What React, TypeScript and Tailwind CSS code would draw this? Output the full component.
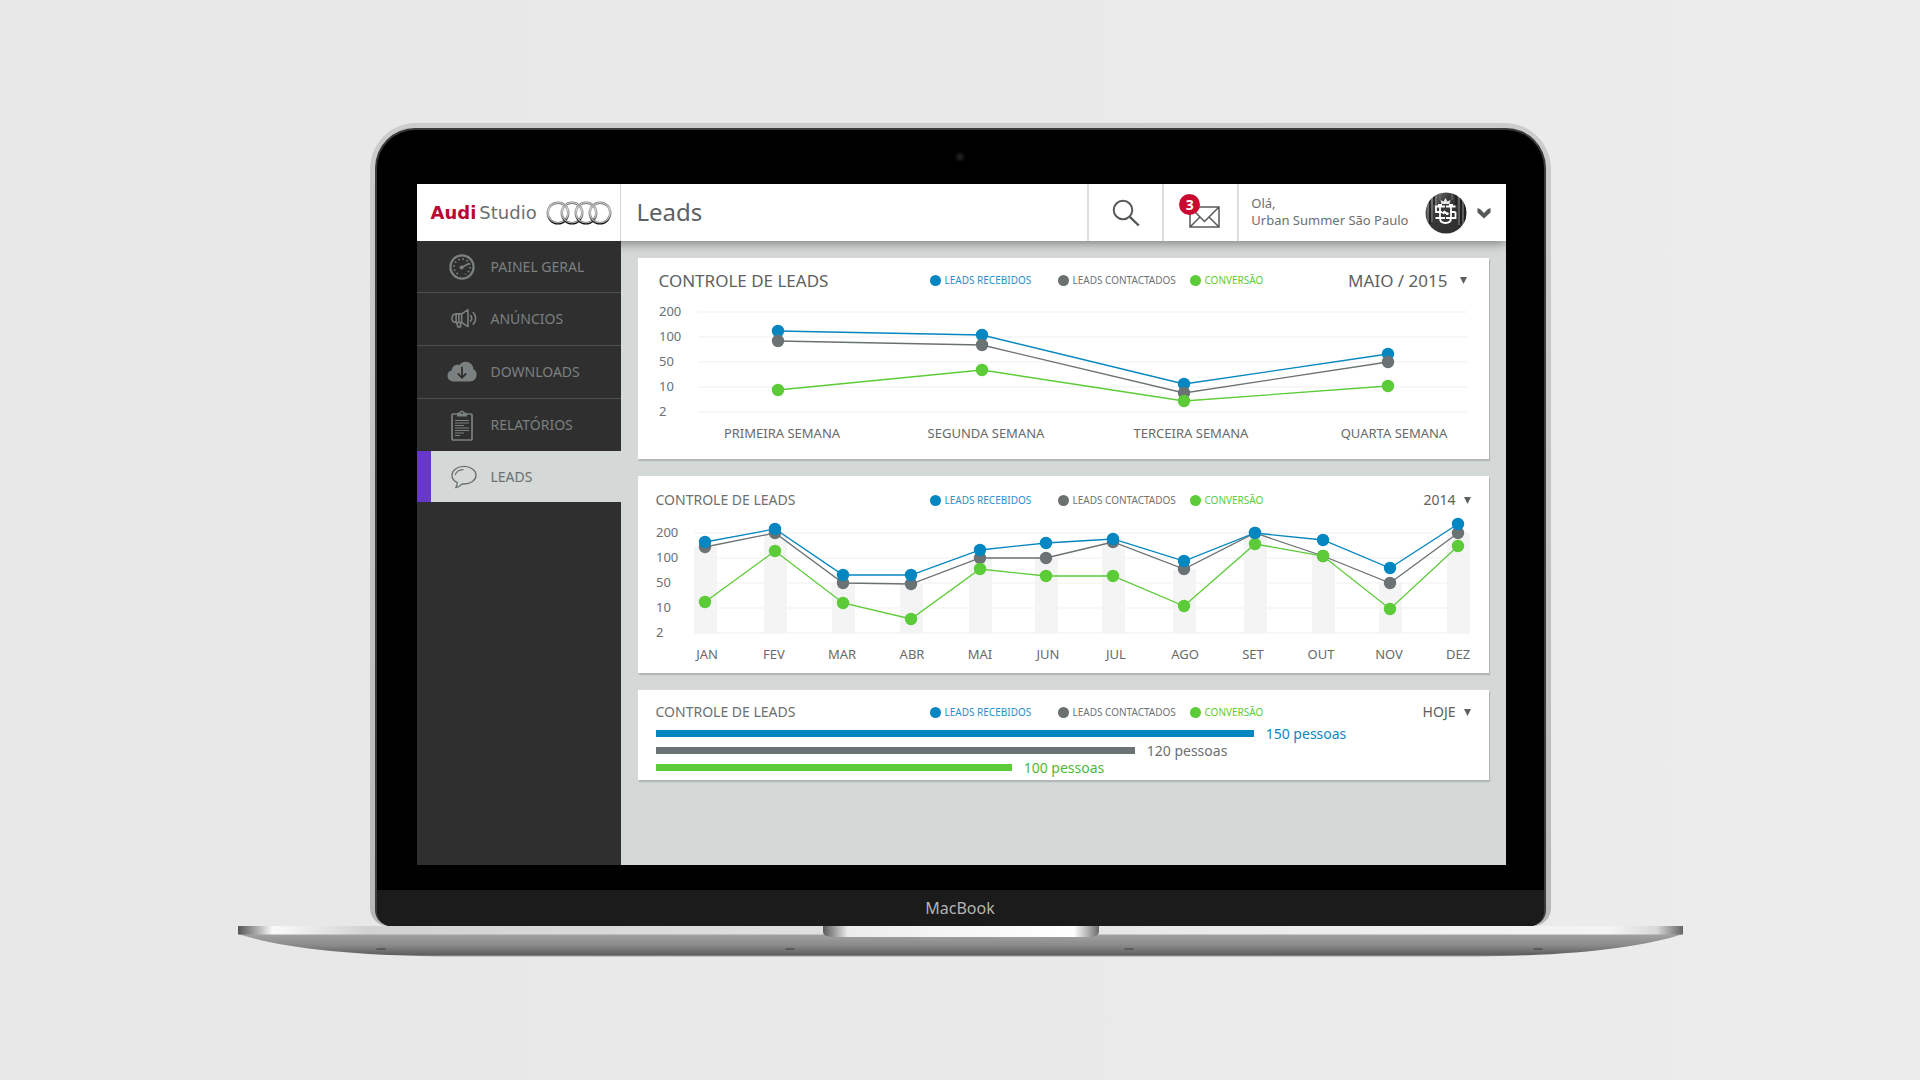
import type { ReactNode } from "react";

type Tone = "received" | "contacted" | "converted";

type Line = { tone: Tone; values: number[] };

const COLORS: Record<Tone, string> = {
  received: "#0486c1",
  contacted: "#6b7273",
  converted: "#5bcb37",
};

const LEGEND = [
  { label: "LEADS RECEBIDOS", dot: "bg-[#0486c1]", text: "text-[#2b8fc9]" },
  { label: "LEADS CONTACTADOS", dot: "bg-[#6b7071]", text: "text-[#6f7374]" },
  { label: "CONVERSÃO", dot: "bg-[#5bcb37]", text: "text-[#5bcb37]" },
];

const TODAY = [
  { value: 150, width: 73.4, bar: "bg-[#0486c1]", text: "text-[#0f86c0]" },
  { value: 120, width: 58.8, bar: "bg-[#6b7273]", text: "text-[#6b7071]" },
  { value: 100, width: 43.7, bar: "bg-[#5bcb37]", text: "text-[#4fb932]" },
];

const SCALE = ["200", "100", "50", "10", "2"];

// Chart coordinates are in units of the card's width (851)
const WEEKS = {
  points: [140, 344, 546, 750],
  labels: ["PRIMEIRA SEMANA", "SEGUNDA SEMANA", "TERCEIRA SEMANA", "QUARTA SEMANA"],
  labelX: [144, 348, 553, 756],
  lines: [
    { tone: "received", values: [35, 39, 88, 58] },
    { tone: "contacted", values: [45, 49, 97, 66] },
    { tone: "converted", values: [94, 74, 105, 90] },
  ] as Line[],
};

const MONTHS = {
  points: [67, 137, 205, 273, 342, 408, 475, 546, 617, 685, 752, 820],
  labels: ["JAN", "FEV", "MAR", "ABR", "MAI", "JUN", "JUL", "AGO", "SET", "OUT", "NOV", "DEZ"],
  labelX: [69, 136, 204, 274, 342, 410, 478, 547, 615, 683, 751, 820],
  lines: [
    { tone: "contacted", values: [31, 17, 67, 68, 42, 42, 26, 53, 17, 40, 67, 17] },
    { tone: "converted", values: [86, 35, 87, 103, 53, 60, 60, 90, 28, 40, 93, 30] },
    { tone: "received", values: [26, 13, 59, 59, 34, 27, 23, 45, 17, 24, 52, 8] },
  ] as Line[],
};

function GaugeIcon() {
  return (
    <svg viewBox="0 0 26 26" className="w-[26px] h-[26px]" fill="none" stroke="currentColor">
      <circle cx="13" cy="13" r="11.6" strokeWidth="2.2" />
      <circle cx="13" cy="13" r="8" strokeWidth="1.8" strokeDasharray="1.5 2.7" />
      <path d="M8 22h10l-5-4.500z" fill="#2f2f2f" stroke="none" />
      <path d="M12.5 13.5 20 9.5" strokeWidth="1.6" strokeLinecap="round" />
      <circle cx="12.6" cy="13.4" r="2" fill="currentColor" stroke="none" />
    </svg>
  );
}

function MegaphoneIcon() {
  return (
    <svg viewBox="0 0 28 22" className="w-7 h-[22px] ml-1" fill="none" stroke="currentColor" strokeWidth="1.7" strokeLinejoin="round" strokeLinecap="round">
      <path d="M11.5 5.5H5.2C2.6 5.5 1 7.6 1 10.2s1.6 4.600 4.200 4.600h6.300z" />
      <path d="M5.500 5.500v9.300M8.500 5.500v9.300M11.500 5.500l6.800-4.500v18.200l-6.800-4.400" />
      <path d="M6 15l1.500 4.500h2.800V15" />
      <path d="M21 7.200c1.600 1.800 1.600 4.200 0 6M24 4c3.400 3.600 3.400 8.900 0 12.500" />
    </svg>
  );
}

function CloudIcon() {
  return (
    <svg viewBox="0 0 30 22" className="w-[30px] h-[22px]" fill="currentColor">
      <path d="M7 20.5C3 20.5.5 18 .5 14.7c0-2.900 1.900-5 4.300-5.500C5 5.800 7.500 3.700 10.300 3.700c.7 0 1.400.1 2 .4C13.700 2 16 .7 18.700.7c4.300 0 7.600 3.300 7.700 7.500 2 .9 3.200 2.900 3.200 5.300 0 3.900-2.700 7-6.600 7z" />
      <path d="M15 6.500V16M11.300 13l3.700 3.800 3.700-3.800" fill="none" stroke="#2f2f2f" strokeWidth="1.8" strokeLinecap="round" />
    </svg>
  );
}

function ClipboardIcon() {
  return (
    <svg viewBox="0 0 22 31" className="w-[22px] h-[31px]" fill="none" stroke="currentColor">
      <rect x="1" y="4" width="20" height="26" rx="1" strokeWidth="1.7" />
      <path d="M6 6.500V4.200c0-1 .8-1.700 1.800-1.700h.7C8.900 1.300 9.800.7 11 .7s2.100.6 2.500 1.800h.7c1 0 1.800.7 1.800 1.700v2.300z" fill="currentColor" stroke="none" />
      <circle cx="11" cy="3" r=".9" fill="#2f2f2f" stroke="none" />
      <path d="M4 10.500h14M4 13h14M4 15.500h9M4 18h14M4 20.500h14M4 23h9M4 25.500h5" strokeWidth="1.2" />
    </svg>
  );
}

function BubbleIcon() {
  return (
    <svg viewBox="0 0 27 24" className="w-[27px] h-6 ml-1" fill="none" stroke="currentColor" strokeWidth="1.4" strokeLinecap="round" strokeLinejoin="round">
      <path d="M13.500 1C6.500 1 1 5 1 10.200c0 3.200 2.200 6 5.600 7.600-.1 2-.7 3.700-1.700 5.200 2.900-.5 5.200-1.900 6.700-3.800.6.100 1.300.1 1.900.1C20.500 19.300 26 15.400 26 10.200S20.500 1 13.500 1z" />
      <path d="M4.500 9.500c.9-2.900 4-4.900 8-5.200" strokeWidth="1.2" />
    </svg>
  );
}

function Rings() {
  return (
    <svg viewBox="0 0 66 24" className="w-[66px] h-6 shrink-0" fill="none" role="img" aria-label="Audi">
      <defs>
        <linearGradient id="chrome" x1="0" y1="0" x2="0" y2="1">
          <stop offset="0" stopColor="#777" />
          <stop offset=".3" stopColor="#aaa" />
          <stop offset=".7" stopColor="#777" />
          <stop offset="1" stopColor="#111" />
        </linearGradient>
      </defs>
      {[12, 26, 40, 54].map((cx) => (
        <g key={cx}>
          <circle cx={cx} cy="12" r="10.3" stroke="url(#chrome)" strokeWidth="2.4" />
          <circle cx={cx} cy="11.700" r="10.200" stroke="#e6e6e6" strokeWidth=".8" />
        </g>
      ))}
    </svg>
  );
}

function Avatar() {
  return (
    <svg viewBox="0 0 42 42" className="w-[42px] h-[42px] shrink-0" fill="none" role="img" aria-label="Urban Summer">
      <defs>
        <clipPath id="round">
          <circle cx="21" cy="21" r="20.5" />
        </clipPath>
        <linearGradient id="photo" x1="0" y1="0" x2="1" y2="1">
          <stop offset="0" stopColor="#8a8a8a" />
          <stop offset=".35" stopColor="#3a3a3a" />
          <stop offset="1" stopColor="#2a2a2a" />
        </linearGradient>
      </defs>
      <g clipPath="url(#round)">
        <rect width="42" height="42" fill="url(#photo)" />
        <path d="M3 8v22M7 4v26M11 2v12M34 3v30M38 6v28" stroke="#888" strokeWidth="1" />
        <path d="M5 6v26M9 3v10M31 1v12M36 4v28M40 10v20" stroke="#1a1a1a" strokeWidth="1.5" />
        <path d="M15 0v8M27 0v8" stroke="#777" strokeWidth="1" />
      </g>
      <path d="M16.500 12l-1-4 3 1.500L20.500 6l2 3.500 3-1.500-1 4z" fill="#e8e8e8" />
      <g stroke="#fff" strokeWidth="1.8">
        <path d="M15 13v13c0 3.200 2.200 5 5.500 5s5.500-1.800 5.500-5V13" />
        <path d="M20 14.500h-9V20h6M10.500 26H20M30.500 14.500H21M30.500 20h-5M30.500 20v6H21" />
        <path d="M13 13h4M24 13h4" />
        <path d="M17.500 21.500l2-1.500 2.500 2 1.500-1" strokeWidth="2.200" />
      </g>
    </svg>
  );
}

function NavItem({ icon, label }: { icon: ReactNode; label: string }) {
  return (
    <li className="h-[53px] first:h-[51px] border-t first:border-t-0 border-[#4d4f4f]">
      <a href="#" className="flex items-center h-full pl-[30px] text-sm text-[#7b8080]">
        <span className="w-[30px] flex justify-center">{icon}</span>
        <span className="ml-[14px]">{label}</span>
      </a>
    </li>
  );
}

function CardHeader({ period, large = false }: { period: string; large?: boolean }) {
  return (
    <div className="grid grid-cols-[274px_1fr_auto] items-center px-[18px] h-6 text-[#5d6162]">
      <h2 className={large ? "pl-[3px] text-[17px]" : "text-sm text-[#6b7071]"}>CONTROLE DE LEADS</h2>
      <ul className="grid grid-cols-[128px_132px_auto] justify-start text-[10px]">
        {LEGEND.map((item) => (
          <li key={item.label} className="flex items-center gap-1">
            <span className={`w-[11px] h-[11px] rounded-full ${item.dot}`} />
            <span className={item.text}>{item.label}</span>
          </li>
        ))}
      </ul>
      <label className={`flex items-center ${large ? "gap-3 pr-1 text-[17px]" : "gap-2 text-sm"}`}>
        <select aria-label="Período" className="appearance-none bg-transparent [field-sizing:content]">
          <option>{period}</option>
        </select>
        <svg viewBox="0 0 8 8" className="w-[7px] h-[7px]" fill="currentColor">
          <path d="M0 0h8L4 8z" />
        </svg>
      </label>
    </div>
  );
}

type ChartProps = {
  data: typeof WEEKS;
  top: number;
  height: number;
  left: number;
  right: number;
  scaleX: number;
  bars?: boolean;
};

function Chart({ data, top, height, left, right, scaleX, bars = false }: ChartProps) {
  const step = 25;
  const bottom = top + step * 4;
  const contacted = data.lines.find((line) => line.tone === "contacted")!;

  return (
    <svg viewBox={`0 0 851 ${height}`} className="block w-full mt-1 overflow-visible text-[13px]" role="img" aria-label="Controle de leads">
      {SCALE.map((label, i) => (
        <g key={label}>
          <line x1={left} x2={right} y1={top + step * i} y2={top + step * i} stroke="#efefef" />
          <text x={scaleX} y={top + step * i + 4} fill="#6b7071">
            {label}
          </text>
        </g>
      ))}
      {bars &&
        data.points.map((x, i) => (
          <rect key={x} x={x - 11} y={contacted.values[i]} width="23" height={bottom - contacted.values[i]} fill="#f4f4f4" />
        ))}
      {data.lines.map(({ tone, values }) => (
        <g key={tone} stroke={COLORS[tone]} fill={COLORS[tone]}>
          <polyline points={values.map((y, i) => `${data.points[i]},${y}`).join(" ")} fill="none" strokeWidth="1.3" />
          {values.map((y, i) => (
            <circle key={i} cx={data.points[i]} cy={y} r="6.2" stroke="none" />
          ))}
        </g>
      ))}
      {data.labels.map((label, i) => (
        <text key={label} x={data.labelX[i]} y={bottom + 26} textAnchor="middle" fill="#666a6b">
          {label}
        </text>
      ))}
    </svg>
  );
}

function Header() {
  return (
    <header className="relative flex h-[57px] bg-white text-[#5d6162] shadow-[0_2px_10px_rgba(80,85,85,0.7)]">
      <div className="flex items-center justify-between w-[204px] shrink-0 pl-[14px] pr-2 border-r border-[#d3d6d6]">
        <p className="font-['DejaVu_Sans',sans-serif] text-lg whitespace-nowrap">
          <span className="font-bold text-[#b90733]">Audi</span>
          <span className="ml-[3px] text-[#6b7071]">Studio</span>
        </p>
        <Rings />
      </div>
      <h1 className="flex-1 self-center pl-4 pb-0.5 text-2xl">Leads</h1>
      <button aria-label="Buscar" className="flex items-center justify-center w-[75px] border-l-2 border-[#dcdfdf]">
        <svg viewBox="0 0 28 28" className="w-7 h-7" fill="none" stroke="#55595a" strokeWidth="2">
          <circle cx="11" cy="11" r="9.3" />
          <path d="M17.8 17.8l9 8.700" strokeWidth="2.4" />
        </svg>
      </button>
      <button aria-label="Mensagens" className="relative w-[75px] border-l-2 border-[#dcdfdf]">
        <svg viewBox="0 0 31 22" className="w-[31px] h-[22px] ml-[25px] mt-2" fill="none" stroke="#55595a" strokeWidth="1.5">
          <path d="M1 1h29v20H1zM1 1l14.500 14.500L30 1M1 21l10-10M30 21L20 11" />
        </svg>
        <span className="absolute left-[15px] top-[10px] w-[21px] h-[21px] rounded-full bg-[#c90930] text-white text-sm leading-[21px] font-bold">
          3
        </span>
      </button>
      <button className="flex items-center pl-3 pr-[15px] border-l-2 border-[#dcdfdf] text-left">
        <span className="pb-0.5 text-[13px] leading-[17px] text-[#6b7071]">
          Olá,
          <br />
          Urban Summer São Paulo
        </span>
        <span className="ml-4">
          <Avatar />
        </span>
        <svg viewBox="0 0 14 12" className="w-[14px] h-3 ml-[10px]" fill="#55595a">
          <path d="M.5 1l2.800 1.200L7 6l3.700-3.800L13.500 1v4.500L7 11.500.5 5.500z" />
        </svg>
      </button>
    </header>
  );
}

function Sidebar() {
  return (
    <nav className="relative w-[204px] shrink-0 bg-[#2f2f2f]">
      <ul>
        <NavItem icon={<GaugeIcon />} label="PAINEL GERAL" />
        <NavItem icon={<MegaphoneIcon />} label="ANÚNCIOS" />
        <NavItem icon={<CloudIcon />} label="DOWNLOADS" />
        <NavItem icon={<ClipboardIcon />} label="RELATÓRIOS" />
        <li>
          <a
            href="#"
            aria-current="page"
            className="flex items-center h-[51px] pl-4 border-l-14 border-[#6637c8] bg-[#d4d8d7] text-sm text-[#6b7071]"
          >
            <span className="w-[30px] flex justify-center">
              <BubbleIcon />
            </span>
            <span className="ml-[14px]">LEADS</span>
          </a>
        </li>
      </ul>
    </nav>
  );
}

function Dashboard() {
  return (
    <div className="overflow-hidden bg-[#d4d8d7]">
      <Header />
      <div className="flex">
        <Sidebar />
        <main className="flex-1 min-w-0 flex flex-col gap-[17px] px-[17px] pt-[17px] pb-[85px]">
          <section className="pt-[10px] pb-2 bg-white shadow-[1px_2px_1px_#b4b8b8]">
            <CardHeader period="MAIO / 2015" large />
            <Chart data={WEEKS} top={16} height={155} left={60} right={829} scaleX={21} />
          </section>
          <section className="pt-3 pb-2 bg-white shadow-[1px_2px_1px_#b4b8b8]">
            <CardHeader period="2014" />
            <Chart data={MONTHS} top={17} height={149} left={56} right={831} scaleX={18} bars />
          </section>
          <section className="pt-[10px] pb-1 bg-white shadow-[1px_2px_1px_#b4b8b8]">
            <CardHeader period="HOJE" />
            <ul className="px-[18px] pt-px">
              {TODAY.map((row) => (
                <li key={row.value} className="flex items-center gap-3 h-[17px]">
                  <span className={`h-[7px] ${row.bar}`} style={{ width: `${row.width}%` }} />
                  <span className={`text-sm leading-[17px] ${row.text}`}>{row.value} pessoas</span>
                </li>
              ))}
            </ul>
          </section>
        </main>
      </div>
    </div>
  );
}

function LaptopBase() {
  return (
    <svg viewBox="0 0 1445 31" className="block w-full">
      <defs>
        <linearGradient id="edge" x1="0" x2="1" y1="0" y2="0">
          <stop offset="0" stopColor="#555" />
          <stop offset=".012" stopColor="#a5a5a5" />
          <stop offset=".024" stopColor="#fafafa" />
          <stop offset=".09" stopColor="#d2d2d2" />
          <stop offset=".5" stopColor="#e4e4e4" />
          <stop offset=".95" stopColor="#f4f4f4" />
          <stop offset=".982" stopColor="#d8d8d8" />
          <stop offset="1" stopColor="#666" />
        </linearGradient>
        <linearGradient id="under" x1="0" x2="0" y1="0" y2="1">
          <stop offset="0" stopColor="#a3a3a3" />
          <stop offset=".5" stopColor="#8a8a8a" />
          <stop offset=".92" stopColor="#606060" />
          <stop offset="1" stopColor="#a0a0a0" />
        </linearGradient>
        <linearGradient id="notch" x1="0" x2="1" y1="0" y2="0">
          <stop offset="0" stopColor="#5a5a5a" />
          <stop offset=".04" stopColor="#9a9a9a" />
          <stop offset=".09" stopColor="#ececec" />
          <stop offset=".5" stopColor="#f6f6f6" />
          <stop offset=".91" stopColor="#fff" />
          <stop offset=".96" stopColor="#b0b0b0" />
          <stop offset="1" stopColor="#6a6a6a" />
        </linearGradient>
      </defs>
      <path d="M0 8C40 21 105 29.500 205 30.500H1240C1340 29.500 1405 21 1445 8z" fill="url(#under)" />
      <rect width="1445" height="8.5" fill="url(#edge)" />
      <path d="M585 0H861V6Q861 11 850 11H596Q585 11 585 6z" fill="url(#notch)" />
      <path d="M139 23h8M548 23h8M887 23h8M1296 23h8" stroke="#505050" strokeWidth="1.5" strokeLinecap="round" />
    </svg>
  );
}

export default function App() {
  return (
    <div className="min-h-screen px-4 pt-[123px] pb-20 bg-linear-to-r from-[#e7e7e7] to-[#ececec] font-['Noto_Sans',sans-serif]">
      <div className="max-w-[1445px] mx-auto">
        <div className="mx-[132px] p-[5px] pb-0 rounded-t-[46px] rounded-b-[18px] bg-linear-to-b from-[#cccccc] to-[#b8b8b8]">
          <div className="overflow-hidden border-2 border-b-0 border-[#3a3a3a] rounded-t-[40px] rounded-b-[16px] bg-black">
            <div className="flex items-center justify-center h-[54px]">
              <span className="w-[10px] h-[10px] rounded-full border-2 border-[#0c0c0c] bg-[#1c1c1c]" />
            </div>
            <div className="pl-10 pr-[38px] pb-[25px]">
              <Dashboard />
            </div>
            <p className="h-9 bg-[#1b1b1c] text-center text-base leading-9 text-[#b4b4b4]">MacBook</p>
          </div>
        </div>
        <LaptopBase />
      </div>
    </div>
  );
}
